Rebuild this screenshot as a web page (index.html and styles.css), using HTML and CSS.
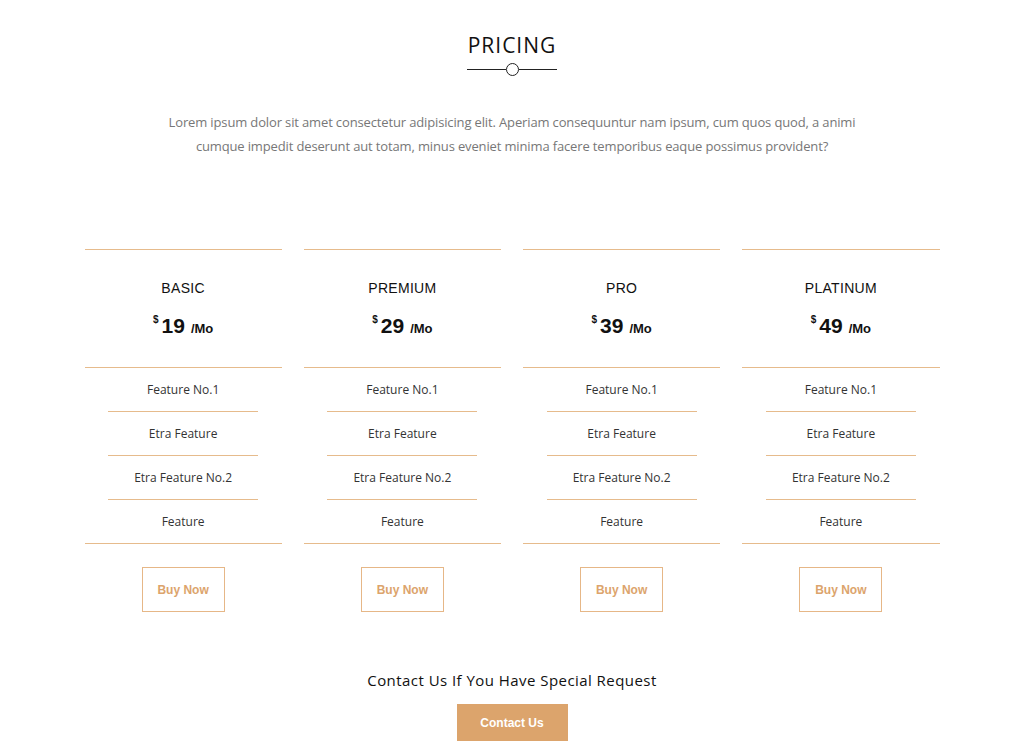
FILE: index.html
```html
<!DOCTYPE html>
<html lang="en">
<head>
<meta charset="utf-8">
<title>Pricing</title>
<link rel="stylesheet" href="styles.css">
</head>
<body>
<section class="pricing">
  <header class="heading">
    <h2 class="title">PRICING</h2>
    <div class="divider"><span class="rule"></span><span class="dot"></span><span class="rule"></span></div>
    <p class="intro">Lorem ipsum dolor sit amet consectetur adipisicing elit. Aperiam consequuntur nam ipsum, cum quos quod, a animi cumque impedit deserunt aut totam, minus eveniet minima facere temporibus eaque possimus provident?</p>
  </header>

  <div class="plans">
    <div class="plan">
      <div class="plan-head">
        <h3 class="plan-name">BASIC</h3>
        <div class="price"><sup class="cur">$</sup><span class="amt">19</span><span class="per">/Mo</span></div>
      </div>
      <ul class="features">
        <li>Feature No.1</li>
        <li>Etra Feature</li>
        <li>Etra Feature No.2</li>
        <li>Feature</li>
      </ul>
      <a class="buy" href="#">Buy Now</a>
    </div>
    <div class="plan">
      <div class="plan-head">
        <h3 class="plan-name">PREMIUM</h3>
        <div class="price"><sup class="cur">$</sup><span class="amt">29</span><span class="per">/Mo</span></div>
      </div>
      <ul class="features">
        <li>Feature No.1</li>
        <li>Etra Feature</li>
        <li>Etra Feature No.2</li>
        <li>Feature</li>
      </ul>
      <a class="buy" href="#">Buy Now</a>
    </div>
    <div class="plan">
      <div class="plan-head">
        <h3 class="plan-name">PRO</h3>
        <div class="price"><sup class="cur">$</sup><span class="amt">39</span><span class="per">/Mo</span></div>
      </div>
      <ul class="features">
        <li>Feature No.1</li>
        <li>Etra Feature</li>
        <li>Etra Feature No.2</li>
        <li>Feature</li>
      </ul>
      <a class="buy" href="#">Buy Now</a>
    </div>
    <div class="plan">
      <div class="plan-head">
        <h3 class="plan-name">PLATINUM</h3>
        <div class="price"><sup class="cur">$</sup><span class="amt">49</span><span class="per">/Mo</span></div>
      </div>
      <ul class="features">
        <li>Feature No.1</li>
        <li>Etra Feature</li>
        <li>Etra Feature No.2</li>
        <li>Feature</li>
      </ul>
      <a class="buy" href="#">Buy Now</a>
    </div>
  </div>

  <div class="contact">
    <p class="contact-text">Contact Us If You Have Special Request</p>
    <a class="contact-btn" href="#">Contact Us</a>
  </div>
</section>
</body>
</html>
```

FILE: styles.css
```css
* { box-sizing: border-box; }
html, body { margin: 0; padding: 0; background: #fff; }
body {
  font-family: "Open Sans", "Liberation Sans", sans-serif;
  color: #222;
}
.pricing {
  width: 1024px;
  padding-top: 32px;
  display: flex;
  flex-direction: column;
  align-items: center;
}
.heading {
  display: flex;
  flex-direction: column;
  align-items: center;
}
.title {
  margin: 0;
  font-weight: 400;
  font-size: 21px;
  line-height: 26px;
  letter-spacing: 1px;
  color: #111;
}
.divider {
  margin-top: 4px;
  display: flex;
  align-items: center;
  width: 90px;
  height: 14px;
}
.rule {
  flex: 1;
  height: 1px;
  background: #222;
}
.dot {
  width: 13px;
  height: 13px;
  border: 1.5px solid #222;
  border-radius: 50%;
}
.intro {
  margin: 34px 0 0;
  width: 700px;
  text-align: center;
  font-size: 13px;
  letter-spacing: -0.14px;
  line-height: 24px;
  color: #777;
}
.plans {
  margin-top: 91px;
  width: 855px;
  display: grid;
  grid-template-columns: repeat(4, 1fr);
  column-gap: 22px;
}
.plan {
  display: flex;
  flex-direction: column;
  align-items: center;
}
.plan-head {
  width: 100%;
  border-top: 1px solid #e6bb8c;
  border-bottom: 1px solid #e6bb8c;
  height: 119px;
  padding-top: 29px;
  text-align: center;
}
.plan-name {
  margin: 0;
  font-family: "Liberation Sans", Arial, sans-serif;
  font-weight: 400;
  font-size: 14px;
  line-height: 18px;
  letter-spacing: 0.3px;
  color: #111;
}
.price {
  margin-top: 10px;
  font-family: "Liberation Sans", Arial, sans-serif;
  font-weight: 700;
  color: #111;
  line-height: 26px;
}
.cur {
  font-size: 10px;
  vertical-align: 10px;
  margin-right: 3px;
}
.amt {
  font-size: 21px;
  margin-right: 6px;
}
.per {
  font-size: 13px;
}
.features {
  list-style: none;
  margin: 0;
  padding: 0;
  width: 100%;
  display: flex;
  flex-direction: column;
  align-items: center;
  border-bottom: 1px solid #e6bb8c;
}
.features li {
  width: 150px;
  height: 44px;
  display: flex;
  align-items: center;
  justify-content: center;
  font-size: 12px;
  color: #333;
  border-bottom: 1px solid #e6bb8c;
}
.features li:last-child { border-bottom: none; height: 43px; padding-bottom: 1px; }
.buy {
  margin-top: 23px;
  width: 83px;
  height: 45px;
  display: flex;
  align-items: center;
  justify-content: center;
  border: 1px solid #e6b787;
  font-family: "Liberation Sans", Arial, sans-serif;
  font-weight: 700;
  font-size: 12px;
  color: #dca46c;
  text-decoration: none;
}
.contact {
  margin-top: 58px;
  display: flex;
  flex-direction: column;
  align-items: center;
}
.contact-text {
  margin: 0;
  font-size: 15px;
  line-height: 20px;
  color: #111;
  letter-spacing: 0.45px;
}
.contact-btn {
  margin-top: 14px;
  width: 111px;
  height: 37px;
  display: flex;
  align-items: center;
  justify-content: center;
  background: #dca46c;
  color: #fff;
  font-family: "Liberation Sans", Arial, sans-serif;
  font-weight: 700;
  font-size: 12px;
  text-decoration: none;
}
```
